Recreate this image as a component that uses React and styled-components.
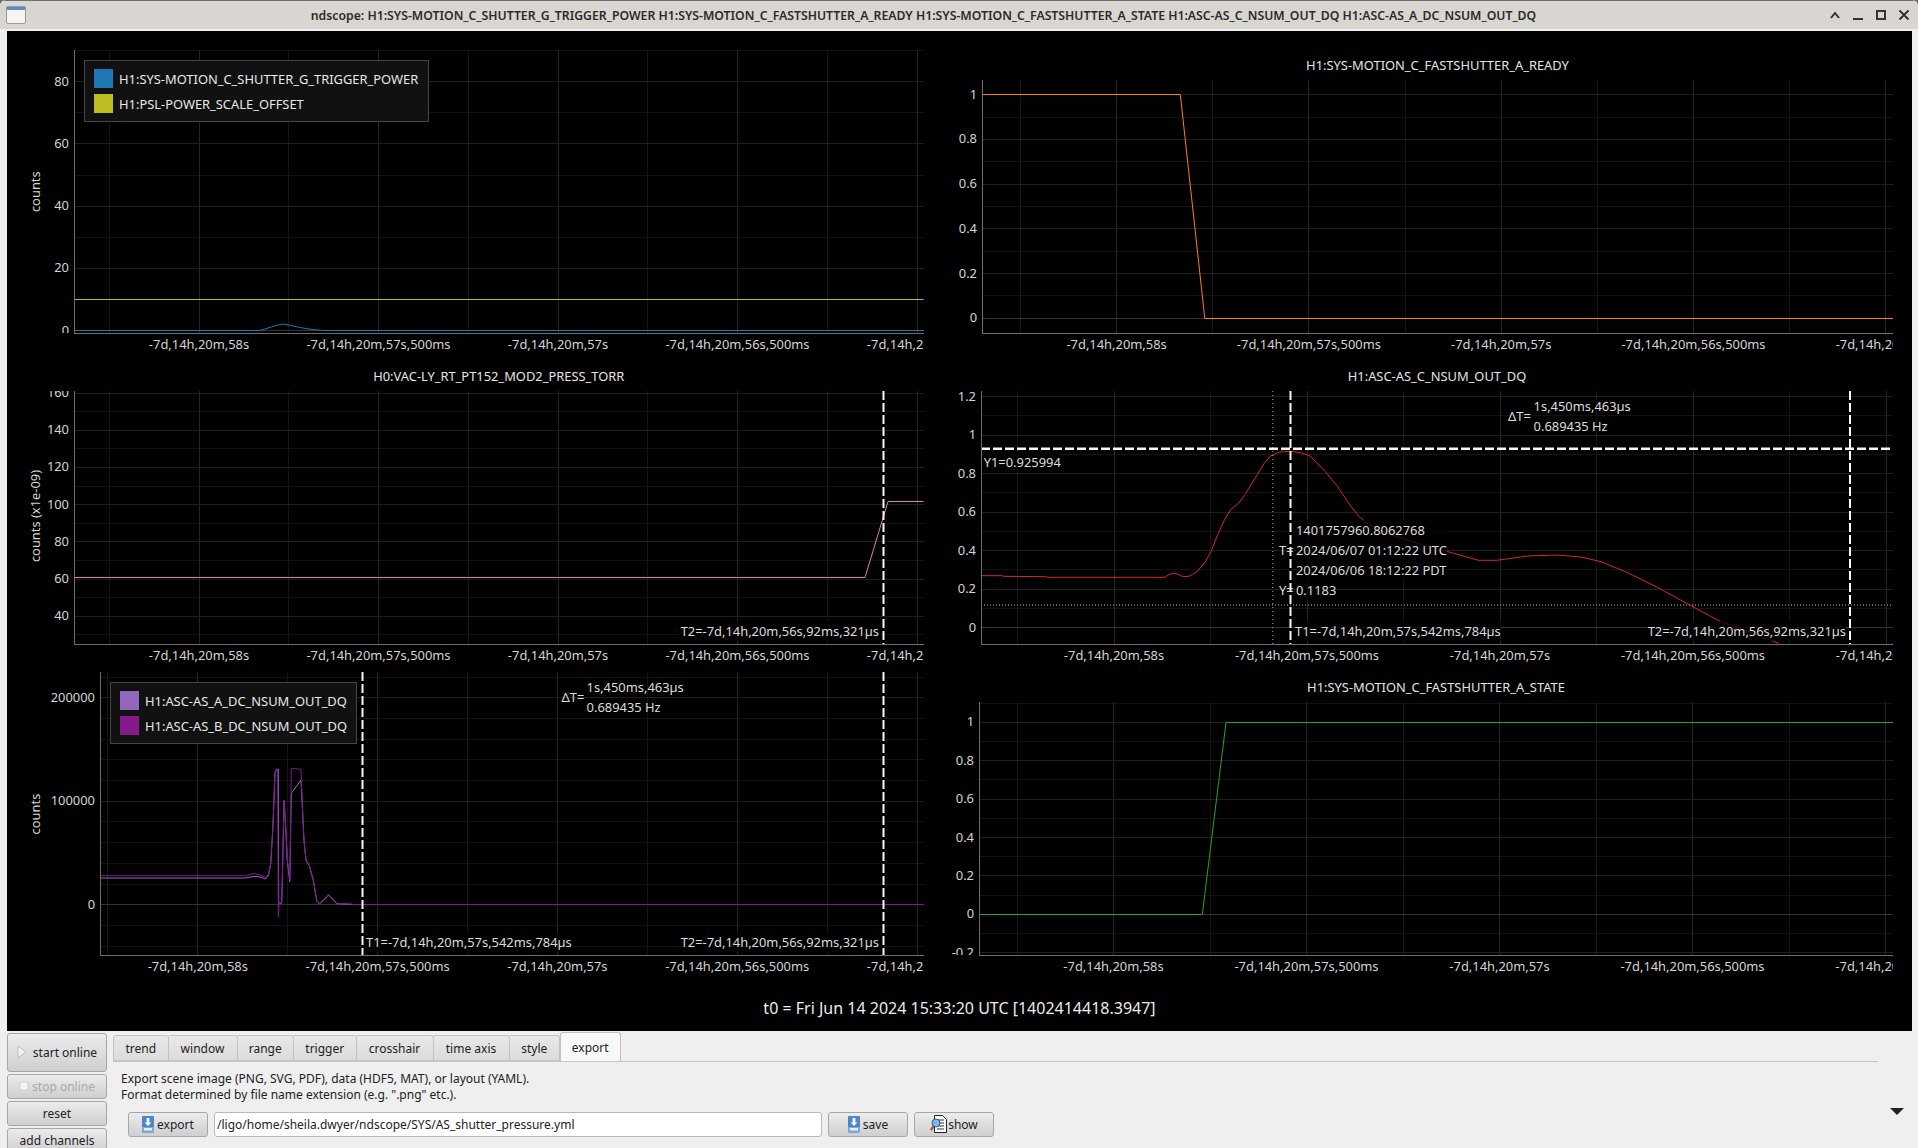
import React from 'react';
import styled, { createGlobalStyle } from 'styled-components';

const TITLE = 'ndscope: H1:SYS-MOTION_C_SHUTTER_G_TRIGGER_POWER H1:SYS-MOTION_C_FASTSHUTTER_A_READY H1:SYS-MOTION_C_FASTSHUTTER_A_STATE H1:ASC-AS_C_NSUM_OUT_DQ H1:ASC-AS_A_DC_NSUM_OUT_DQ';
const TIME_LABELS = ['-7d,14h,20m,58s', '-7d,14h,20m,57s,500ms', '-7d,14h,20m,57s', '-7d,14h,20m,56s,500ms', '-7d,14h,20m,56s'];
const T1_TEXT = 'T1=-7d,14h,20m,57s,542ms,784µs';
const T2_TEXT = 'T2=-7d,14h,20m,56s,92ms,321µs';
const TABS = ['trend', 'window', 'range', 'trigger', 'crosshair', 'time axis', 'style', 'export'];

// crops of the screenshot were squashed, so traces are noted in crop coords
const crop = (pts, ox, oy, sx = 1.633) => pts.map(([a, b]) => [ox + a / sx, oy + b / 3]);
const pointsOf = (pts) => pts.map(([a, b]) => `${a.toFixed(1)},${b.toFixed(1)}`).join(' ');

const RED = crop([
  [37, 617], [72, 617], [75, 619], [143, 620], [147, 622], [338, 622], [345, 613], [353, 610], [360, 613],
  [367, 620], [377, 619], [390, 606], [404, 575], [413, 545], [425, 490], [435, 450], [445, 420], [458, 400],
  [470, 370], [485, 325], [500, 280], [510, 258], [525, 246], [543, 244], [560, 248], [575, 258], [600, 305],
  [620, 350], [640, 405], [655, 440], [670, 462], [700, 490], [750, 520], [800, 545], [850, 571], [880, 571],
  [930, 558], [980, 555], [1020, 562], [1050, 575], [1090, 605], [1140, 650], [1190, 700], [1240, 750], [1340, 820],
], 958, 370);

const DC_B = [
  [-388, 407], [50, 407], [70, 400], [90, 405], [105, 412], [115, 405], [122, 370], [128, 270], [132, 180], [135, 95],
  [140, 85], [143, 95], [145, 532], [147, 490], [155, 488], [158, 370], [162, 180], [167, 260], [172, 360], [180, 420],
  [184, 85], [213, 88], [218, 220], [222, 300], [228, 360], [238, 375], [250, 420], [260, 480], [268, 491], [280, 480],
  [295, 463], [305, 472], [320, 490], [355, 491], [370, 493.5], [2079, 493.5],
];
const DC_A = [
  [-388, 414], [45, 414], [75, 409], [95, 412], [105, 417], [115, 408], [122, 372], [128, 272], [132, 182], [135, 97],
  [145, 87], [146, 490], [155, 490], [158, 372], [162, 182], [167, 262], [172, 362], [179, 425], [184, 160], [213, 120],
  [218, 222], [222, 302], [228, 362], [238, 377], [250, 422], [260, 482], [268, 492], [280, 482], [295, 465], [305, 474],
  [320, 491], [370, 493.5], [2079, 493.5],
];
const dcCrop = (pts) => pts.map(([a, b]) => [230 + a / 3, 740 + b / 3]);

const GlobalStyle = createGlobalStyle`
  html, body {
    margin: 0;
    background: #6b6b6b;
    overflow: hidden;
  }
  body, input, button {
    font-family: "Noto Sans", "Open Sans", sans-serif;
    font-size: 12px;
  }
`;

const Win = styled.div`
  width: 1918px;
  height: 1148px;
  display: flex;
  flex-direction: column;
  background: #efefef;
  border-radius: 6px 6px 0 0;
  overflow: hidden;
`;

const TitleBar = styled.div`
  height: 28px;
  flex: none;
  display: flex;
  align-items: center;
  padding: 0 8px 0 6px;
  background: #d9d6d2;
  border-top: 1px solid #6e6e6e;
  color: #2b2b2b;
  font-weight: 600;
  font-size: 12.26px;
`;

const TitleText = styled.div`
  flex: 1;
  text-align: center;
  white-space: nowrap;
  padding-right: 8px;
`;

const WinButtons = styled.div`
  display: flex;
  align-items: center;
  gap: 11px;
`;

const Scene = styled.div`
  height: 986px;
  margin: 2px 6px 0 7px;
  padding-top: 14px;
  flex: none;
  background: #000;
  display: grid;
  grid-template-columns: 940px 965px;
  grid-template-rows: 321px 306px 316px 43px;
`;

const Cell = styled.div`
  position: relative;
  overflow: hidden;
`;

const PlotTitle = styled.div`
  display: flex;
  align-items: flex-end;
  justify-content: center;
  height: ${(p) => p.$height}px;
  margin-left: ${(p) => p.$left}px;
  width: ${(p) => p.$width}px;
  padding-bottom: 6px;
  box-sizing: border-box;
  color: #e4e4e4;
  font-size: 12.9px;
  line-height: 18px;
`;

const Chart = styled.svg`
  display: block;
  text {
    font-family: "Noto Sans", "Open Sans", sans-serif;
    font-size: 12.9px;
    fill: #d4d4d4;
  }
`;

const Legend = styled.div`
  position: absolute;
  left: ${(p) => p.$left}px;
  top: ${(p) => p.$top}px;
  width: ${(p) => p.$width}px;
  box-sizing: border-box;
  display: flex;
  flex-direction: column;
  gap: 6px;
  padding: 8px 9px;
  background: #111;
  border: 1px solid #444;
  color: #e8e8e8;
  font-size: 12.9px;
`;

const LegendRow = styled.div`
  display: flex;
  align-items: center;
  gap: 6px;
  height: 19px;
  white-space: nowrap;
`;

const Swatch = styled.span`
  width: 19px;
  height: 19px;
  flex: none;
  background: ${(p) => p.$color};
`;

const CursorLabel = styled.div`
  position: absolute;
  left: ${(p) => p.$left}px;
  top: ${(p) => p.$top}px;
  transform: translate(${(p) => (p.$right ? '-100%' : '0')}, calc(-50% - 1px));
  background: ${(p) => (p.$bare ? 'transparent' : 'rgba(0, 0, 0, 0.72)')};
  color: #dcdcdc;
  font-size: 12.9px;
  line-height: 20px;
  white-space: pre;
`;

const T0 = styled.div`
  grid-column: 1 / span 2;
  padding-top: 11px;
  text-align: center;
  color: #ececec;
  font-size: 16px;
  line-height: 18px;
`;

const Bottom = styled.div`
  flex: 1;
  min-height: 0;
  display: flex;
`;

const Side = styled.div`
  width: 100px;
  flex: none;
  margin-left: 7px;
  padding-top: 2px;
  display: flex;
  flex-direction: column;
  gap: 2px;
`;

const Btn = styled.button`
  display: flex;
  align-items: center;
  justify-content: center;
  gap: ${(p) => p.$gap || 3}px;
  height: ${(p) => p.$height || 25}px;
  flex: none;
  padding: 0 0 1px;
  box-sizing: border-box;
  border: 1px solid #a6a6a6;
  border-radius: 3px;
  background: linear-gradient(#ececec, #cfcfcf);
  color: ${(p) => (p.disabled ? '#a9a9a9' : '#222')};
  white-space: nowrap;
`;

const RowBtn = styled(Btn)`
  width: ${(p) => p.$width}px;
  height: 25px;
`;

const Main = styled.div`
  flex: 1;
  min-width: 0;
  margin-left: 6px;
  padding-top: 2px;
`;

const TabBar = styled.div`
  display: flex;
  align-items: flex-end;
  height: 29px;
  width: 1765px;
  border-bottom: 1px solid #c6c6c6;
  box-sizing: border-box;
`;

const Tab = styled.div`
  height: ${(p) => (p.$active ? 29 : 26)}px;
  width: ${(p) => p.$width}px;
  box-sizing: border-box;
  display: flex;
  align-items: center;
  justify-content: center;
  color: #222;
  background: ${(p) => (p.$active ? '#f8f8f8' : 'linear-gradient(#e8e8e8, #dcdcdc)')};
  border: 1px solid #c2c2c2;
  border-bottom: ${(p) => (p.$active ? 'none' : '1px solid #c6c6c6')};
  border-left: ${(p) => (p.$first || p.$active ? '1px solid #c2c2c2' : 'none')};
  border-radius: ${(p) => (p.$first || p.$active ? '3px 3px 0 0' : '0 3px 0 0')};
`;

const Help = styled.div`
  padding: 9px 0 0 8px;
  color: #222;
  line-height: 16px;
`;

const ExportRow = styled.div`
  display: flex;
  align-items: flex-start;
  gap: 6px;
  margin: 9px 0 0 15px;
`;

const PathField = styled.div`
  width: 608px;
  height: 25px;
  box-sizing: border-box;
  padding: 0 0 1px 2px;
  display: flex;
  align-items: center;
  background: #fff;
  border: 1px solid #b8b8b8;
  border-radius: 3px;
  color: #222;
`;

const MoreArrow = styled.div`
  width: 0;
  height: 0;
  margin: 0 14px 0 auto;
  border-left: 7px solid transparent;
  border-right: 7px solid transparent;
  border-top: 7px solid #222;
  transform: translateY(-4px);
`;

function WinGlyph({ d, stroke = 2 }) {
  return (
    <svg width="12" height="12" viewBox="0 0 12 12" fill="none" stroke="#333" strokeWidth={stroke}>
      <path d={d} />
    </svg>
  );
}

function AppIcon() {
  return (
    <svg width="20" height="18" viewBox="0 0 20 18">
      <rect x="0.5" y="0.5" width="19" height="17" rx="1.5" fill="#f4f4f4" stroke="#9a9a9a" />
      <rect x="1" y="1" width="18" height="3" fill="#5f86c4" />
    </svg>
  );
}

function SaveIcon() {
  return (
    <svg width="12" height="17" viewBox="0 0 12 17">
      <rect width="12" height="17" rx="1" fill="#4f86c6" />
      <rect y="11" width="12" height="6" fill="#7fa9d8" />
      <path d="M4.6 2h2.8v4.5h2L6 10 2.6 6.5h2z" fill="#f2f5fa" />
      <rect x="2" y="12" width="8" height="2.5" fill="#e8edf4" />
    </svg>
  );
}

function ShowIcon() {
  return (
    <svg width="17" height="18" viewBox="0 0 17 18">
      <path d="M4.5.5h8l4 4v13h-12z" fill="#fff" stroke="#222" />
      <path d="M8 5h6M9 8h5M9 11h5M7 14h7" stroke="#333" />
      <path d="M3.5 11.5L.8 15" stroke="#b5482a" strokeWidth="2.2" />
      <circle cx="6" cy="8" r="4" fill="#7db7ea" stroke="#2d5f96" />
    </svg>
  );
}

function PlayIcon() {
  return (
    <svg width="10" height="14" viewBox="0 0 10 14">
      <path d="M1 1l8 6-8 6z" fill="#f2f2f2" stroke="#bdbdbd" />
    </svg>
  );
}

function StopIcon() {
  return (
    <svg width="10" height="10" viewBox="0 0 10 10">
      <rect x="1" y="1" width="8" height="8" fill="#f4f4f4" stroke="#cfcfcf" />
    </svg>
  );
}

function Plot({ id, x, y, w, h, title, box, xStart, xStep, yLabels, yStart, yStep, ySub = 2, ylabel, ylabelY, traces, vDashed = [], hDashed = [], vDotted = [], hDotted = [], labels = [], legend }) {
  const titleH = title ? box.top - y : 0;
  const svgTop = y + titleH;
  const svgH = h - titleH;
  const inY = (v) => v > box.top && v < box.bottom;
  const major = [0, 1, 2, 3, 4].map((i) => xStart + i * xStep);
  const minor = major.map((v) => v - xStep / 2);
  const ticks = yLabels.map((label, i) => ({ label, at: yStart + i * yStep }));
  const hMinor = [];
  for (let i = -ySub * 2; i <= yLabels.length * ySub + ySub * 2; i++) {
    const v = yStart + (i * yStep) / ySub;
    if (i % ySub !== 0 && inY(v)) hMinor.push(v);
  }
  const px = (v) => Math.floor(v) + 0.5;

  return (
    <Cell>
      {title && (
        <PlotTitle $height={titleH} $left={box.left - x} $width={box.right - box.left}>
          {title}
        </PlotTitle>
      )}
      <Chart width={w} height={svgH} viewBox={`${x} ${svgTop} ${w} ${svgH}`}>
        <defs>
          <clipPath id={`${id}-area`}>
            <rect x={box.left} y={box.top} width={box.right - box.left} height={box.bottom - box.top} />
          </clipPath>
          <clipPath id={`${id}-xl`}>
            <rect x={x} y={box.bottom} width={box.right - x} height={40} />
          </clipPath>
          <clipPath id={`${id}-yl`}>
            <rect x={x} y={box.top} width={box.left - x} height={box.bottom - box.top} />
          </clipPath>
        </defs>

        <g shapeRendering="crispEdges" strokeWidth="1">
          {minor.map((v) => <line key={v} x1={px(v)} x2={px(v)} y1={box.top} y2={box.bottom} stroke="#151515" />)}
          {hMinor.map((v) => <line key={v} x1={box.left} x2={box.right} y1={px(v)} y2={px(v)} stroke="#121212" />)}
          {major.map((v) => <line key={v} x1={px(v)} x2={px(v)} y1={box.top} y2={box.bottom} stroke="#242424" />)}
          {ticks.filter((t) => inY(t.at)).map((t) => (
            <line key={t.label} x1={box.left} x2={box.right} y1={px(t.at)} y2={px(t.at)} stroke={t.label === '0' ? '#333' : '#1f1f1f'} />
          ))}
        </g>

        <g clipPath={`url(#${id}-area)`} fill="none">
          {traces.map((t) => (
            <polyline key={t.color} points={pointsOf(t.pts)} stroke={t.color} strokeWidth="1" />
          ))}
          {vDotted.map((v) => <line key={v} x1={v} x2={v} y1={box.top} y2={box.bottom} stroke="#b0b0b0" strokeDasharray="1 3" />)}
          {hDotted.map((v) => <line key={v} x1={box.left} x2={box.right} y1={v} y2={v} stroke="#b0b0b0" strokeDasharray="1 2" />)}
          {vDashed.map((v) => <line key={v} x1={v} x2={v} y1={box.top} y2={box.bottom} stroke="#f8f8f8" strokeWidth="2" strokeDasharray="9 3" />)}
          {hDashed.map((v) => <line key={v} x1={box.left} x2={box.right} y1={v} y2={v} stroke="#f8f8f8" strokeWidth="2.5" strokeDasharray="9 3" />)}
        </g>

        <path d={`M${box.left + 0.5} ${box.top}V${box.bottom + 0.5}H${box.right}`} fill="none" stroke="#6e6e6e" shapeRendering="crispEdges" />

        <g clipPath={`url(#${id}-yl)`}>
          {ticks.map((t) => (
            <text key={t.label} x={box.left - 5} y={t.at - 1} textAnchor="end" dominantBaseline="central">{t.label}</text>
          ))}
        </g>
        <g clipPath={`url(#${id}-xl)`}>
          {major.map((v, i) => (
            <text key={v} x={v} y={box.bottom + 11} textAnchor="middle" dominantBaseline="central">{TIME_LABELS[i]}</text>
          ))}
        </g>
        <text x={ylabel.x} y={ylabelY} textAnchor="middle" dominantBaseline="central" transform={`rotate(-90 ${ylabel.x} ${ylabelY})`}>
          {ylabel.text}
        </text>
      </Chart>

      {labels.map((l) => (
        <CursorLabel key={l.text} $left={l.x - x} $top={l.y - y} $right={l.right} $bare={l.bare}>
          {l.text}
        </CursorLabel>
      ))}
      {legend && (
        <Legend $left={legend.x - x} $top={legend.y - y} $width={legend.width}>
          {legend.items.map((item) => (
            <LegendRow key={item.name}>
              <Swatch $color={item.color} />
              {item.name}
            </LegendRow>
          ))}
        </Legend>
      )}
    </Cell>
  );
}

const LEFT = { x: 7, w: 940 };
const RIGHT = { x: 947, w: 965 };
const ROW1 = { y: 45, h: 321 };
const ROW2 = { y: 366, h: 306 };
const ROW3 = { y: 672, h: 316 };
const counts = (x) => ({ x, text: 'counts' });

export default function App() {
  return (
    <Win>
      <GlobalStyle />
      <TitleBar>
        <AppIcon />
        <TitleText>{TITLE}</TitleText>
        <WinButtons>
          <WinGlyph d="M2 9l4-5 4 5" />
          <WinGlyph d="M1 10h10" />
          <WinGlyph d="M2 2h8v8H2z" />
          <WinGlyph d="M1.5 1.5l9 9M10.5 1.5l-9 9" />
        </WinButtons>
      </TitleBar>

      <Scene>
        <Plot
          id="p1" {...LEFT} {...ROW1}
          box={{ left: 74, right: 923.5, top: 50, bottom: 333 }}
          xStart={199} xStep={179.5}
          yLabels={['80', '60', '40', '20', '0']} yStart={81.7} yStep={62.25}
          ylabel={counts(35)} ylabelY={191.7}
          traces={[
            { color: '#bcbd22', pts: [[74, 299.5], [924, 299.5]] },
            { color: '#1f77b4', pts: [[74, 330.5], [260, 330.5], [268, 328], [276, 325.5], [283, 324], [291, 325.5], [300, 327.5], [312, 329.5], [324, 330.5], [924, 330.5]] },
          ]}
          legend={{
            x: 84, y: 60, width: 345,
            items: [
              { name: 'H1:SYS-MOTION_C_SHUTTER_G_TRIGGER_POWER', color: '#1f77b4' },
              { name: 'H1:PSL-POWER_SCALE_OFFSET', color: '#bcbd22' },
            ],
          }}
        />
        <Plot
          id="p2" {...RIGHT} {...ROW1}
          title="H1:SYS-MOTION_C_FASTSHUTTER_A_READY"
          box={{ left: 982, right: 1893, top: 80, bottom: 333 }}
          xStart={1116.6} xStep={192.3}
          yLabels={['1', '0.8', '0.6', '0.4', '0.2', '0']} yStart={94.7} yStep={44.72}
          ylabel={counts(940)} ylabelY={206.7}
          traces={[{ color: '#ff7f0e', pts: [[982, 94.5], [1180.3, 94.5], [1204.8, 318.5], [1893, 318.5]] }]}
        />
        <Plot
          id="p3" {...LEFT} {...ROW2}
          title="H0:VAC-LY_RT_PT152_MOD2_PRESS_TORR"
          box={{ left: 74, right: 923.5, top: 391, bottom: 644 }}
          xStart={199} xStep={179.5}
          yLabels={['160', '140', '120', '100', '80', '60', '40']} yStart={393} yStep={37.2}
          ylabel={{ x: 35, text: 'counts (x1e-09)' }} ylabelY={516}
          traces={[{ color: '#e377c2', pts: [[74, 577.5], [865, 577.5], [888, 501.5], [924, 501.5]] }]}
          vDashed={[883.5]}
          labels={[{ text: T2_TEXT, x: 879, y: 632, right: true }]}
        />
        <Plot
          id="p4" {...RIGHT} {...ROW2}
          title="H1:ASC-AS_C_NSUM_OUT_DQ"
          box={{ left: 981, right: 1893, top: 391, bottom: 644 }}
          xStart={1114} xStep={193}
          yLabels={['1.2', '1', '0.8', '0.6', '0.4', '0.2', '0']} yStart={396.7} yStep={38.5}
          ylabel={counts(940)} ylabelY={518}
          traces={[{ color: '#d62728', pts: RED }]}
          vDashed={[1290.5, 1850]}
          hDashed={[448.7]}
          vDotted={[1272.8]}
          hDotted={[605]}
          labels={[
            { text: 'ΔT=', x: 1508, y: 416.7, bare: true },
            { text: '1s,450ms,463µs', x: 1533.6, y: 406.7, bare: true },
            { text: '0.689435 Hz', x: 1533.6, y: 426.7, bare: true },
            { text: 'Y1=0.925994', x: 983.7, y: 463 },
            { text: '1401757960.8062768\n2024/06/07 01:12:22 UTC\n2024/06/06 18:12:22 PDT', x: 1296, y: 550.7 },
            { text: 'T=', x: 1279, y: 550.7, bare: true },
            { text: 'Y=', x: 1279, y: 590.7, bare: true },
            { text: '0.1183', x: 1296, y: 590.7 },
            { text: T1_TEXT, x: 1295, y: 632 },
            { text: T2_TEXT, x: 1846, y: 632, right: true },
          ]}
        />
        <Plot
          id="p5" {...LEFT} {...ROW3}
          box={{ left: 100, right: 923.5, top: 672, bottom: 955 }}
          xStart={197.8} xStep={179.8}
          yLabels={['200000', '100000', '0']} yStart={697.7} yStep={103.5} ySub={5}
          ylabel={counts(35)} ylabelY={814}
          traces={[
            { color: '#9467bd', pts: dcCrop(DC_A) },
            { color: '#7f1a8c', pts: dcCrop(DC_B) },
          ]}
          vDashed={[362.5, 883.5]}
          labels={[
            { text: 'ΔT=', x: 561.6, y: 697.7, bare: true },
            { text: '1s,450ms,463µs', x: 586.6, y: 687.7, bare: true },
            { text: '0.689435 Hz', x: 586.6, y: 707.7, bare: true },
            { text: T1_TEXT, x: 366, y: 942.7 },
            { text: T2_TEXT, x: 879, y: 942.7, right: true },
          ]}
          legend={{
            x: 110, y: 682, width: 247,
            items: [
              { name: 'H1:ASC-AS_A_DC_NSUM_OUT_DQ', color: '#9467bd' },
              { name: 'H1:ASC-AS_B_DC_NSUM_OUT_DQ', color: '#861a8c' },
            ],
          }}
        />
        <Plot
          id="p6" {...RIGHT} {...ROW3}
          title="H1:SYS-MOTION_C_FASTSHUTTER_A_STATE"
          box={{ left: 979, right: 1893, top: 702, bottom: 955 }}
          xStart={1113.5} xStep={193}
          yLabels={['1', '0.8', '0.6', '0.4', '0.2', '0', '-0.2']} yStart={722.3} yStep={38.4}
          ylabel={counts(940)} ylabelY={829}
          traces={[{ color: '#2ca02c', pts: [[979, 914.5], [1202.3, 914.5], [1226, 722.5], [1893, 722.5]] }]}
        />
        <T0>t0 = Fri Jun 14 2024 15:33:20 UTC [1402414418.3947]</T0>
      </Scene>

      <Bottom>
        <Side>
          <Btn $height={39} $gap={6}><PlayIcon />start online</Btn>
          <Btn disabled><StopIcon />stop online</Btn>
          <Btn>reset</Btn>
          <Btn>add channels</Btn>
        </Side>
        <Main>
          <TabBar>
            {TABS.map((t, i) => (
              <Tab key={t} $first={i === 0} $active={t === 'export'} $width={[55.5, 69, 56.5, 62.5, 77, 76, 50.5, 60.5][i]}>
                {t}
              </Tab>
            ))}
          </TabBar>
          <Help>
            Export scene image (PNG, SVG, PDF), data (HDF5, MAT), or layout (YAML).
            <br />
            Format determined by file name extension (e.g. ".png" etc.).
          </Help>
          <ExportRow>
            <RowBtn $width={80}><SaveIcon />export</RowBtn>
            <PathField>/ligo/home/sheila.dwyer/ndscope/SYS/AS_shutter_pressure.yml</PathField>
            <RowBtn $width={80}><SaveIcon />save</RowBtn>
            <RowBtn $width={80} $gap={1}><ShowIcon />show</RowBtn>
            <MoreArrow />
          </ExportRow>
        </Main>
      </Bottom>
    </Win>
  );
}
